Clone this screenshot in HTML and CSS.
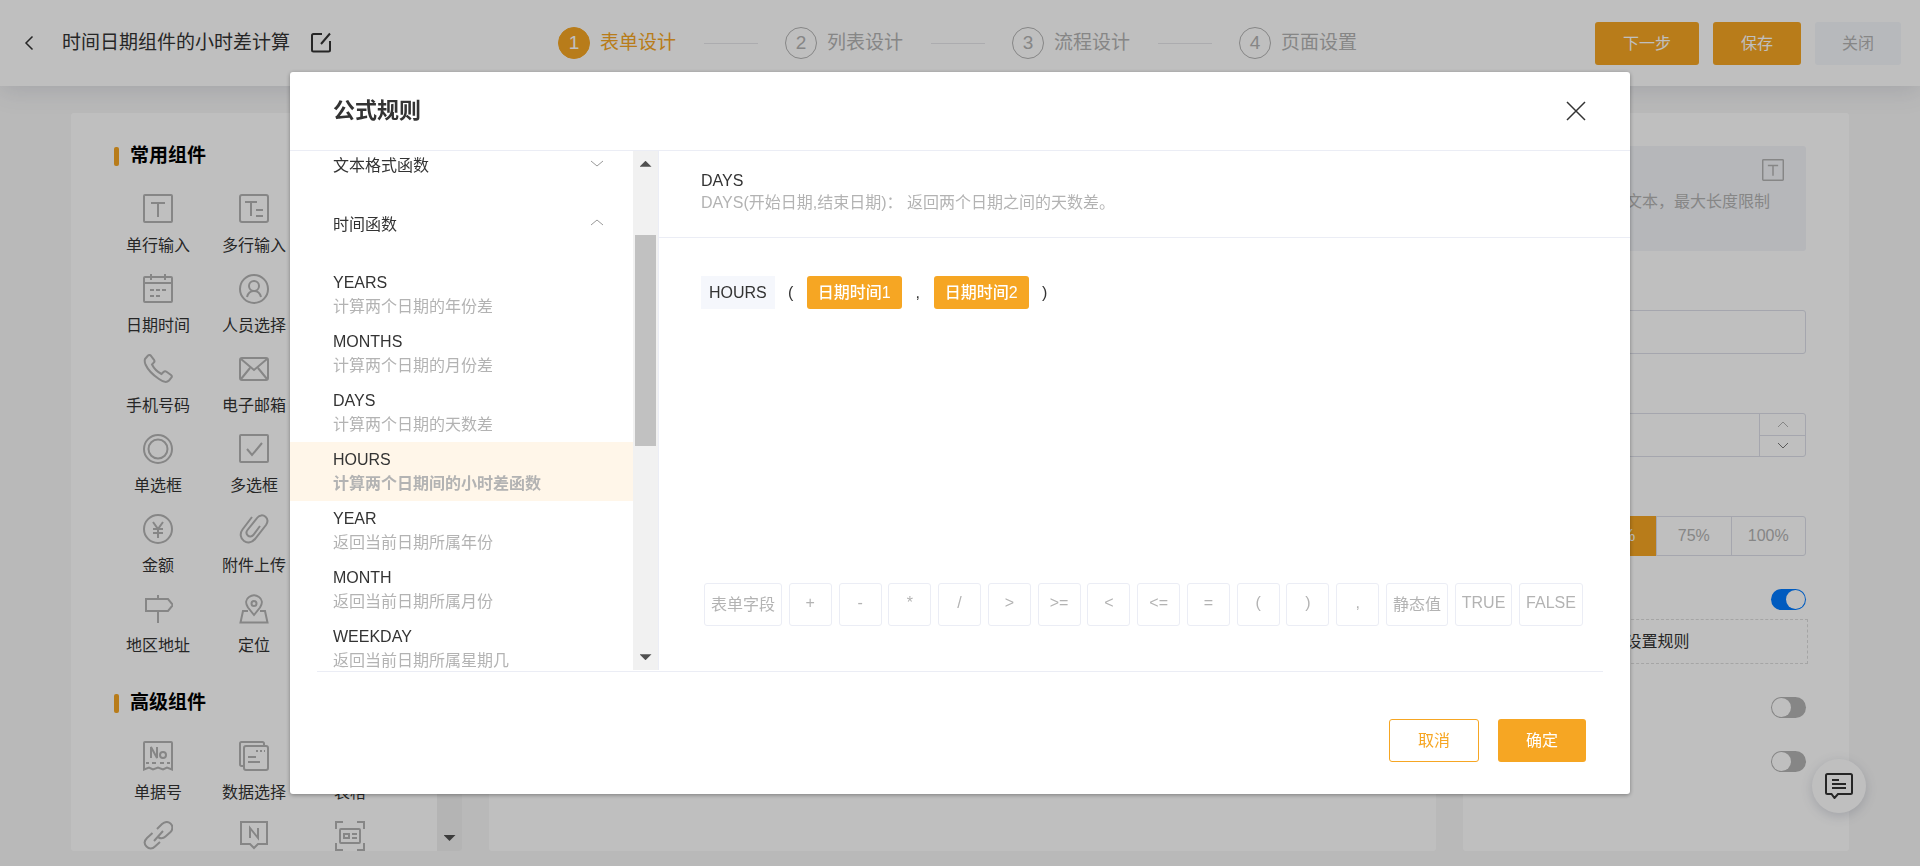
FILE: index.html
```html
<!DOCTYPE html>
<html lang="zh-CN">
<head>
<meta charset="utf-8">
<meta name="viewport" content="width=device-width, initial-scale=1">
<title>公式规则</title>
<link rel="stylesheet" href="styles.css">
</head>
<body>
<div class="page">
  <header class="topbar">
    <div class="topbar-left">
      <button class="icon-btn" type="button" aria-label="返回"><svg class="back-icon" viewBox="0 0 10 16"><path d="M8.500 1.500L2 8l6.500 6.500"/></svg></button>
      <h1 class="form-name">时间日期组件的小时差计算</h1>
      <button class="icon-btn" type="button" aria-label="编辑名称"><svg class="edit-icon" viewBox="0 0 22 22"><path d="M12 2H3.500A1.500 1.500 0 0 0 2 3.500v14.500a1.500 1.500 0 0 0 1.500 1.500h15a1.500 1.500 0 0 0 1.500-1.500V9M20 1.500L11 12"/></svg></button>
    </div>
    <ol class="steps">
      <li class="step step-active"><span class="step-num">1</span><span class="step-name">表单设计</span></li>
      <li class="step"><span class="step-num">2</span><span class="step-name">列表设计</span></li>
      <li class="step"><span class="step-num">3</span><span class="step-name">流程设计</span></li>
      <li class="step"><span class="step-num">4</span><span class="step-name">页面设置</span></li>
    </ol>
    <div class="topbar-actions">
      <button class="btn btn-primary" type="button">下一步</button>
      <button class="btn btn-primary" type="button">保存</button>
      <button class="btn btn-muted" type="button">关闭</button>
    </div>
  </header>

  <main class="workspace">
    <section class="panel palette">
      <div class="palette-body">
        <h2 class="group-title">常用组件</h2>
        <div class="tiles tiles-two">
          <button class="tile" type="button"><svg class="tile-icon" viewBox="0 0 30 30"><rect x="1" y="1" width="28" height="27" rx="1"/><path d="M8 9h14M15 9v14"/></svg>单行输入</button>
          <button class="tile" type="button"><svg class="tile-icon" viewBox="0 0 30 30"><rect x="1" y="1" width="28" height="27" rx="2"/><path d="M6 8h12M12 8v14M17 16h7M17 22h7"/></svg>多行输入</button>
          <button class="tile" type="button"><svg class="tile-icon" viewBox="0 0 30 30"><rect x="1" y="3" width="28" height="25" rx="1"/><path d="M1 9h28M8 0v6M22 0v6M7 16h4M13 16h4M19 16h4M7 22h4M13 22h4"/></svg>日期时间</button>
          <button class="tile" type="button"><svg class="tile-icon" viewBox="0 0 30 30"><circle cx="15" cy="15" r="14"/><circle cx="15" cy="12" r="5"/><path d="M8 23c1-4 4-6 7-6s6 2 7 6"/></svg>人员选择</button>
          <button class="tile" type="button"><svg class="tile-icon" viewBox="0 0 30 30"><path d="M2 5L5 1.500C6 .800 7 .800 8 1.800l3 4c.700 1 .600 2-.300 2.800L9 10.500c2 4 5.500 7.500 9.500 9.500l2-2c1-.900 2-.900 3-.200l4.500 3.200c1 .800 1 1.800.300 2.700L26 26.500c-2 2-6 1.500-10-1.500C10 21 5 16 2.500 10.500 1.500 8 1.500 6.500 2 5z"/></svg>手机号码</button>
          <button class="tile" type="button"><svg class="tile-icon" viewBox="0 0 30 30"><rect x="1" y="4" width="28" height="22" rx="2"/><path d="M2 5l13 11L28 5M2 25l9-11M28 25l-9-11"/></svg>电子邮箱</button>
          <button class="tile" type="button"><svg class="tile-icon" viewBox="0 0 30 30"><circle cx="15" cy="15" r="14"/><circle cx="15" cy="15" r="9.500"/></svg>单选框</button>
          <button class="tile" type="button"><svg class="tile-icon" viewBox="0 0 30 30"><rect x="1" y="1" width="28" height="27" rx="1"/><path d="M8 15l5 6L23 9"/></svg>多选框</button>
          <button class="tile" type="button"><svg class="tile-icon" viewBox="0 0 30 30"><circle cx="15" cy="15" r="14"/><path d="M10 8l5 7 5-7M15 15v9M10 15h10M10 19h10"/></svg>金额</button>
          <button class="tile" type="button"><svg class="tile-icon" viewBox="0 0 30 30"><path d="M13 3L3.500 15.500c-3 4-2 9 1.500 11.500s8 1.500 11-2l11-14c2-3 2-6-.500-8.200s-6-1.800-8 .700L8.500 16c-1.500 2-1.300 4 .300 5.500s4 1.200 5.500-.500L21 12"/></svg>附件上传</button>
          <button class="tile" type="button"><svg class="tile-icon" viewBox="0 0 30 30"><path d="M3 5h22l5 6-5 6H3zM15 1v4M15 17v12"/></svg>地区地址</button>
          <button class="tile" type="button"><svg class="tile-icon" viewBox="0 0 30 30"><path d="M15 21l-6-7.500C6 9 7 5 10 3c3-2.200 7-2.200 10 0 3 2 4 6 1 10.500z"/><circle cx="15" cy="9.500" r="2.500"/><path d="M9 17H4L1.500 28.500h27L26 17h-5"/></svg>定位</button>
        </div>
        <h2 class="group-title">高级组件</h2>
        <div class="tiles">
          <button class="tile" type="button"><svg class="tile-icon" viewBox="0 0 30 30"><path d="M1 22V2a1 1 0 0 1 1-1h26a1 1 0 0 1 1 1v20M1 22v6.500l5-2 4 2 5-2 5 2 4-2 5 2V22M3 22h3M9 22h4M17 22h4M24 22h3M8 17V6l6 11V6"/><circle cx="20" cy="14" r="3"/></svg>单据号</button>
          <button class="tile" type="button"><svg class="tile-icon" viewBox="0 0 30 30"><path d="M5 25H2.500A1.500 1.500 0 0 1 1 23.500v-21A1.500 1.500 0 0 1 2.500 1h21A1.500 1.500 0 0 1 25 2.500V5"/><rect x="5" y="5" width="24" height="24" rx="2"/><path d="M17 10h2M21 10h2M25 10h1M9 16h8M9 21h12"/></svg>数据选择</button>
          <button class="tile" type="button"><svg class="tile-icon" viewBox="0 0 30 30"><rect x="1" y="1" width="28" height="28" rx="1"/><path d="M1 10h28M10 10v19"/></svg>表格</button>
          <button class="tile" type="button" aria-label="链接"><svg class="tile-icon" viewBox="0 0 30 30"><path d="M14 8l5-5c3-2.500 6-2.500 8.500-.500s2.500 6 0 8.500l-5 4.500c-2 2-5 2-7 1M9.500 12L4 17c-3 3-3 6-.500 8.500s6 2.500 8.500 0l5-4.500M11 20l9-10"/></svg></button>
          <button class="tile" type="button" aria-label="备注"><svg class="tile-icon" viewBox="0 0 30 30"><path d="M2 1h26v22h-9l-4 4-4-4H2zM11 17V7l8 10V7"/></svg></button>
          <button class="tile" type="button" aria-label="证件识别"><svg class="tile-icon" viewBox="0 0 30 30"><path d="M1 8V1h7M22 1h7v7M29 22v7h-7M8 29H1v-7"/><rect x="5" y="8" width="20" height="14" rx="1"/><rect x="9" y="13" width="5" height="4"/><path d="M17 13h5M17 17h5"/></svg></button>
        </div>
      </div>
      <div class="scroll-track track-end" aria-hidden="true"><span class="arrow-down"></span></div>
    </section>

    <section class="panel canvas" aria-label="画布"></section>

    <aside class="panel props">
      <div class="hint">
        <svg class="hint-icon" viewBox="0 0 30 30"><rect x="1" y="1" width="28" height="28" rx="1"/><path d="M8 9h14M15 9v14"/></svg>
        <p class="hint-text">文本，最大长度限制</p>
      </div>
      <input class="field" type="text" aria-label="标题">
      <div class="stepper">
        <input class="stepper-input" type="text" inputmode="numeric" aria-label="最大长度">
        <div class="stepper-btns">
          <button class="spin" type="button" aria-label="增加"><svg class="chev" viewBox="0 0 12 7"><path d="M1 6l5-5 5 5"/></svg></button>
          <button class="spin spin-down" type="button" aria-label="减少"><svg class="chev" viewBox="0 0 12 7"><path d="M1 1l5 5 5-5"/></svg></button>
        </div>
      </div>
      <div class="segments" role="radiogroup" aria-label="宽度">
        <label class="segment"><input class="segment-radio" type="radio" name="width"><span>25%</span></label>
        <label class="segment"><input class="segment-radio" type="radio" name="width" checked><span>50%</span></label>
        <label class="segment"><input class="segment-radio" type="radio" name="width"><span>75%</span></label>
        <label class="segment"><input class="segment-radio" type="radio" name="width"><span>100%</span></label>
      </div>
      <input class="switch" type="checkbox" role="switch" aria-label="公式" checked>
      <button class="rule-btn" type="button">设置规则</button>
      <div class="switches">
        <input class="switch" type="checkbox" role="switch" aria-label="只读">
        <input class="switch" type="checkbox" role="switch" aria-label="隐藏">
      </div>
    </aside>
  </main>
  <button class="chat" type="button" aria-label="反馈"><svg class="chat-icon" viewBox="0 0 28 26"><path d="M2.500 1h23A1.500 1.500 0 0 1 27 2.500v17a1.500 1.500 0 0 1-1.500 1.500H13l-3.500 4L6.500 21h-4A1.500 1.500 0 0 1 1 19.500v-17A1.500 1.500 0 0 1 2.500 1zM7 7h7M7 11h14M7 15h14"/></svg></button>
</div>

<div class="mask">
  <section class="modal" role="dialog" aria-modal="true" aria-labelledby="dlg-title">
    <header class="modal-head">
      <h2 class="modal-title" id="dlg-title">公式规则</h2>
      <button class="icon-btn" type="button" aria-label="关闭对话框"><svg class="close-icon" viewBox="0 0 20 20"><path d="M1 1l18 18M19 1L1 19"/></svg></button>
    </header>
    <div class="modal-body">
      <nav class="funcs" aria-label="函数列表">
        <div class="func-list">
          <button class="func-group" type="button" aria-expanded="false">文本格式函数<svg class="chev" viewBox="0 0 12 7"><path d="M0 1l6 5 6-5"/></svg></button>
          <button class="func-group" type="button" aria-expanded="true">时间函数<svg class="chev" viewBox="0 0 12 7"><path d="M0 6l6-5 6 5"/></svg></button>
          <button class="func" type="button">YEARS<span class="func-desc">计算两个日期的年份差</span></button>
          <button class="func" type="button">MONTHS<span class="func-desc">计算两个日期的月份差</span></button>
          <button class="func" type="button">DAYS<span class="func-desc">计算两个日期的天数差</span></button>
          <button class="func func-active" type="button">HOURS<span class="func-desc">计算两个日期间的小时差函数</span></button>
          <button class="func" type="button">YEAR<span class="func-desc">返回当前日期所属年份</span></button>
          <button class="func" type="button">MONTH<span class="func-desc">返回当前日期所属月份</span></button>
          <button class="func" type="button">WEEKDAY<span class="func-desc">返回当前日期所属星期几</span></button>
        </div>
        <div class="scroll-track" aria-hidden="true"><span class="arrow-up"></span><span class="scroll-thumb"></span><span class="arrow-down"></span></div>
      </nav>
      <div class="editor">
        <div class="func-help">
          <h3 class="help-name">DAYS</h3>
          <p class="help-text">DAYS(开始日期,结束日期)： 返回两个日期之间的天数差。</p>
        </div>
        <div class="formula">
          <span class="token">HOURS</span><span class="punct">(</span><span class="tag">日期时间1</span><span class="punct">,</span><span class="tag">日期时间2</span><span class="punct">)</span>
        </div>
        <div class="keys">
          <button class="key" type="button">表单字段</button>
          <button class="key" type="button">+</button>
          <button class="key" type="button">-</button>
          <button class="key" type="button">*</button>
          <button class="key" type="button">/</button>
          <button class="key" type="button">&gt;</button>
          <button class="key" type="button">&gt;=</button>
          <button class="key" type="button">&lt;</button>
          <button class="key" type="button">&lt;=</button>
          <button class="key" type="button">=</button>
          <button class="key" type="button">(</button>
          <button class="key" type="button">)</button>
          <button class="key" type="button">,</button>
          <button class="key" type="button">静态值</button>
          <button class="key" type="button">TRUE</button>
          <button class="key" type="button">FALSE</button>
        </div>
      </div>
    </div>
    <footer class="modal-foot">
      <button class="btn btn-outline" type="button">取消</button>
      <button class="btn btn-primary" type="button">确定</button>
    </footer>
  </section>
</div>
</body>
</html>
```
FILE: styles.css
```css
:root {
  --orange: #f6a623;
  --ink: #333;
  --grey: #b3b3b3;
  --line: #ebedf5;
  --field-line: #dcdee8;
}

* {
  box-sizing: border-box;
}

body,
h1,
h2,
h3,
p,
ol {
  margin: 0;
  padding: 0;
}

body,
button,
input {
  font-family: "Liberation Sans", "Noto Sans CJK SC", sans-serif;
  font-size: 16px;
  font-weight: 400;
  color: var(--ink);
}

button {
  padding: 0;
  border: 0;
  background: none;
  cursor: pointer;
}

svg {
  display: block;
  fill: none;
  stroke: currentColor;
  stroke-width: 2;
}

.page {
  display: flex;
  flex-direction: column;
  height: 100vh;
  overflow: hidden;
  background: #f7f7f7;
}

/* Top bar */
.topbar {
  display: grid;
  grid-template-columns: 1fr auto 1fr;
  align-items: center;
  flex: none;
  height: 86px;
  padding: 0 19px 0 24px;
  background: #fff;
  box-shadow: 0 4px 24px rgba(60, 70, 100, 0.15);
}

.topbar-left {
  display: flex;
  align-items: center;
}

.back-icon {
  width: 10px;
  height: 16px;
  stroke-width: 1.5;
}

.form-name {
  margin: 0 20px 0 28px;
  font-size: 19px;
  font-weight: 400;
  line-height: 28px;
}

.edit-icon {
  width: 22px;
  height: 22px;
}

.steps {
  display: flex;
  margin-right: 10px;
  list-style: none;
}

.step {
  display: flex;
  align-items: center;
  gap: 10px;
  font-size: 19px;
  line-height: 28px;
  color: var(--grey);
}

.step:not(:last-child)::after {
  content: "";
  width: 54px;
  height: 1px;
  margin: 0 27px 0 18px;
  background: #e6e6ea;
}

.step-num {
  width: 32px;
  height: 32px;
  border: 1px solid var(--grey);
  border-radius: 50%;
  line-height: 30px;
  text-align: center;
}

.step-active {
  color: var(--orange);
}

.step-active .step-num {
  border-color: var(--orange);
  background: var(--orange);
  color: #fff;
}

.topbar-actions {
  display: flex;
  justify-content: flex-end;
  gap: 14px;
}

.btn {
  height: 43px;
  padding: 0 28px;
  border-radius: 3px;
  line-height: 44px;
}

.btn-primary {
  background: var(--orange);
  color: #fff;
}

.btn-muted {
  padding: 0 27px;
  background: #f5f7fb;
  color: var(--grey);
}

.btn-outline {
  border: 1px solid var(--orange);
  background: #fff;
  color: var(--orange);
  line-height: 42px;
}

/* Workspace */
.workspace {
  display: flex;
  flex: 1;
  gap: 27px;
  min-height: 0;
  padding: 27px 71px 15px;
}

.panel {
  border-radius: 3px;
  background: #fff;
}

.palette {
  display: flex;
  flex: none;
  width: 391px;
  overflow: hidden;
}

.palette-body {
  flex: 1;
  padding: 31px 39px 0;
}

.canvas {
  flex: 1;
}

.group-title {
  display: flex;
  align-items: center;
  gap: 11px;
  margin: 0 0 26px 4px;
  font-size: 19px;
  font-weight: 700;
  line-height: 24px;
  color: #000;
}

.group-title::before {
  content: "";
  width: 5px;
  height: 19px;
  border-radius: 2px;
  background: var(--orange);
}

.tiles {
  display: grid;
  grid-template-columns: repeat(3, 96px);
  grid-auto-rows: 80px;
}

.tiles-two {
  grid-template-columns: repeat(2, 96px);
  margin-bottom: 17px;
}

.tile {
  display: flex;
  flex-direction: column;
  align-items: center;
  gap: 10px;
  line-height: 24px;
}

.tile-icon {
  width: 30px;
  height: 30px;
  color: var(--grey);
}

/* Scrollbars */
.scroll-track {
  display: flex;
  flex-direction: column;
  align-items: center;
  justify-content: space-between;
  width: 25px;
  padding: 10px 0;
  background: #f1f1f1;
}

.track-end {
  justify-content: flex-end;
}

.arrow-up,
.arrow-down {
  width: 12px;
  height: 6px;
  background: #505050;
  clip-path: polygon(50% 0, 100% 100%, 0 100%);
}

.arrow-down {
  clip-path: polygon(0 0, 100% 0, 50% 100%);
}

.scroll-thumb {
  width: 21px;
  height: 211px;
  margin: 68px 0 auto;
  background: #c1c1c1;
}

/* Property panel */
.props {
  flex: none;
  width: 386px;
  padding: 33px 43px 0 44px;
}

.hint {
  display: flex;
  flex-direction: column;
  align-items: flex-end;
  gap: 9px;
  height: 105px;
  padding: 13px 22px 0;
  border-radius: 3px;
  background: #f3f5f9;
  color: var(--grey);
}

.hint-icon {
  width: 22px;
  height: 22px;
}

.hint-text {
  padding-right: 14px;
  line-height: 24px;
}

.field,
.stepper {
  display: flex;
  width: 100%;
  height: 44px;
  margin-top: 59px;
  border: 1px solid var(--field-line);
  border-radius: 3px;
  background: #fff;
}

.stepper-input {
  flex: 1;
  min-width: 0;
  border: 0;
  background: none;
}

.stepper-btns {
  display: flex;
  flex-direction: column;
  width: 46px;
  border-left: 1px solid var(--field-line);
}

.spin {
  display: flex;
  flex: 1;
  align-items: center;
  justify-content: center;
  color: var(--grey);
}

.spin-down {
  border-top: 1px solid var(--field-line);
  color: #777;
}

.chev {
  width: 12px;
  height: 7px;
  stroke-width: 1;
}

.segments {
  display: flex;
  height: 40px;
  margin: 59px 0 33px;
  border: 1px solid var(--field-line);
  border-radius: 3px;
}

.segment {
  position: relative;
  flex: 1;
  border-left: 1px solid var(--field-line);
  line-height: 38px;
  text-align: center;
  color: var(--grey);
}

.segment:first-child {
  border-left: 0;
}

.segment:has(:checked) {
  margin: -1px 0;
  background: var(--orange);
  line-height: 40px;
  color: #fff;
}

.segment-radio {
  position: absolute;
  opacity: 0;
}

.switch {
  display: flex;
  width: 35px;
  height: 21px;
  margin: 0 0 0 auto;
  padding: 1px;
  border-radius: 11px;
  background: var(--grey);
  appearance: none;
}

.switch::before {
  content: "";
  width: 19px;
  height: 19px;
  border-radius: 50%;
  background: #fff;
}

.switch:checked {
  justify-content: flex-end;
  background: #007aff;
}

.rule-btn {
  width: calc(100% + 2px);
  height: 45px;
  margin: 9px 0 33px;
  padding-bottom: 3px;
  border: 1px dashed #dcdcdc;
}

.switches {
  display: grid;
  gap: 33px;
}

.chat {
  display: flex;
  align-items: center;
  justify-content: center;
  position: fixed;
  right: 54px;
  bottom: 53px;
  width: 54px;
  height: 54px;
  border-radius: 50%;
  background: #fff;
  box-shadow: 0 3px 12px rgba(60, 70, 100, 0.2);
}

.chat-icon {
  width: 28px;
  height: 26px;
}

/* Dialog */
.mask {
  display: flex;
  align-items: center;
  justify-content: center;
  position: fixed;
  inset: 0;
  background: rgba(0, 0, 0, 0.25);
}

.modal {
  width: 90%;
  max-width: 1340px;
  border-radius: 3px;
  background: #fff;
  box-shadow: 0 1px 4px rgba(0, 0, 0, 0.35);
}

.modal-head {
  display: flex;
  align-items: center;
  justify-content: space-between;
  height: 79px;
  padding: 0 44px 0 43px;
  border-bottom: 1px solid var(--line);
}

.modal-title {
  font-size: 22px;
  font-weight: 700;
  line-height: 32px;
}

.close-icon {
  width: 20px;
  height: 20px;
  stroke-width: 1.5;
}

.modal-body {
  display: flex;
  height: 60vh;
}

.funcs {
  display: flex;
  flex: none;
  width: 369px;
  border-right: 1px solid var(--line);
}

.func-list {
  flex: 1;
  overflow: hidden;
}

.func-group {
  display: flex;
  align-items: flex-start;
  justify-content: space-between;
  width: 100%;
  height: 57px;
  padding: 3px 30px 0 43px;
  line-height: 24px;
}

.func-group .chev {
  margin-top: 6px;
  color: #999;
}

.func-group + .func-group {
  padding-top: 5px;
}

.func {
  display: flex;
  flex-direction: column;
  justify-content: center;
  width: 100%;
  height: 59px;
  padding: 2px 43px 0;
  line-height: 24px;
  text-align: left;
}

.func-desc {
  color: var(--grey);
}

.func-active {
  background: #fff6e9;
}

.func-active .func-desc {
  font-weight: 700;
}

.editor {
  display: flex;
  flex: 1;
  flex-direction: column;
  min-width: 0;
}

.func-help {
  height: 87px;
  padding: 19px 42px 0;
  border-bottom: 1px solid var(--line);
}

.help-name,
.help-text {
  font-size: 16px;
  font-weight: 400;
  line-height: 22px;
}

.help-text {
  color: var(--grey);
}

.formula {
  display: flex;
  flex: 1;
  align-items: flex-start;
  padding: 38px 42px;
  line-height: 33px;
}

.token {
  padding: 0 8px;
  background: #f5f7fc;
}

.punct {
  width: 32px;
  text-align: center;
}

.tag {
  padding: 0 11px;
  border-radius: 3px;
  background: var(--orange);
  font-weight: 500;
  color: #fff;
}

.keys {
  display: flex;
  justify-content: space-between;
  padding: 0 47px 44px 45px;
}

.key {
  min-width: 43px;
  height: 43px;
  padding: 0 6px 3px;
  border: 1px solid var(--line);
  border-radius: 3px;
  color: var(--grey);
}

.modal-foot {
  display: flex;
  justify-content: flex-end;
  gap: 19px;
  margin: 1px 27px 0;
  padding: 47px 17px 32px;
  border-top: 1px solid var(--line);
}
```
